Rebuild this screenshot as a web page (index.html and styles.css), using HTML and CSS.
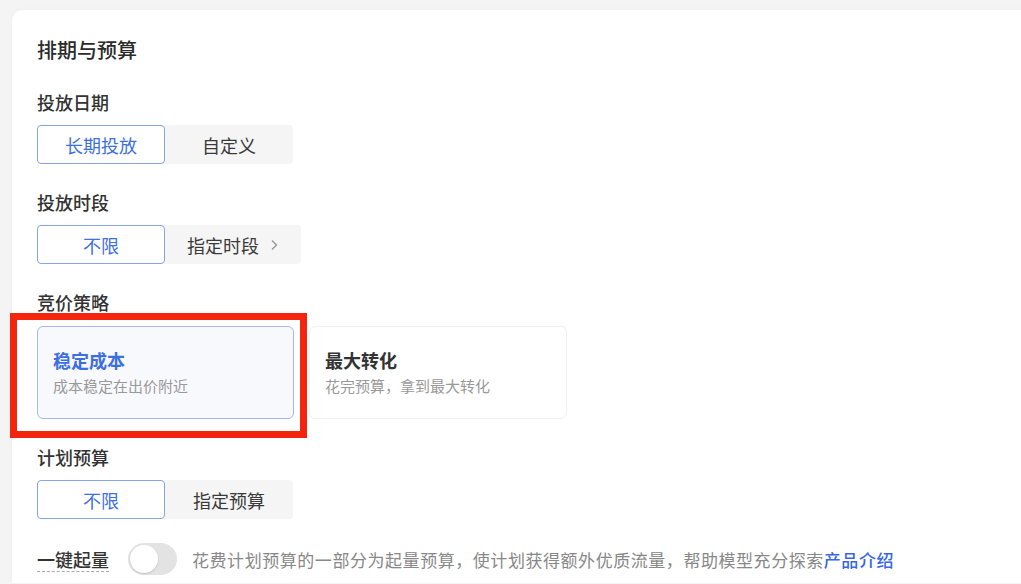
FILE: index.html
```html
<!DOCTYPE html>
<html lang="zh-CN">
<head>
<meta charset="UTF-8">
<title>排期与预算</title>
<link rel="stylesheet" href="styles.css">
</head>
<body>
<!-- 排期与预算 -->
<div class="panel">
<div class="panel-title">排期与预算</div>

<div class="field">
<div class="field-label">投放日期</div>
<div class="segment">
<div class="seg-item active">长期投放</div>
<div class="seg-item">自定义</div>
</div>
</div>

<div class="field">
<div class="field-label">投放时段</div>
<div class="segment">
<div class="seg-item active">不限</div>
<div class="seg-item wide">指定时段
<svg class="chevron" viewBox="0 0 10 14"><path d="M3 2.5l4.5 4.5-4.5 4.5"/></svg>
</div>
</div>
</div>

<div class="field">
<div class="field-label strategy-label">竞价策略</div>
<div class="strategy">
<div class="strategy-wrap">
<div class="strategy-card selected">
<div class="strategy-name">稳定成本</div>
<div class="strategy-desc">成本稳定在出价附近</div>
</div>
<div class="mark"></div>
</div>
<div class="strategy-card">
<div class="strategy-name">最大转化</div>
<div class="strategy-desc">花完预算，拿到最大转化</div>
</div>
</div>
</div>

<div class="field">
<div class="field-label">计划预算</div>
<div class="segment">
<div class="seg-item active">不限</div>
<div class="seg-item">指定预算</div>
</div>
</div>

<div class="boost">
<span class="boost-label">一键起量</span>
<span class="switch"><span class="knob"></span></span>
<span class="boost-desc">花费计划预算的一部分为起量预算，使计划获得额外优质流量，帮助模型充分探索<a class="link">产品介绍</a></span>
</div>
</div>
</body>
</html>
```

FILE: styles.css
```css
/* 页面背景 */
body {
margin: 0;
background-color: #f4f4f4;
font-family: "Noto Sans CJK SC", "Noto Sans", sans-serif;
color: #333;
overflow: hidden;
}

/* 白色面板 */
.panel {
background-color: #fff;
margin: 10px -30px 0 12px;
padding: 26px 0 8px 25px;
border-radius: 10px 0 0 0;
box-shadow: 0 0 6px rgba(0, 0, 0, 0.03);
}

.panel-title {
font-size: 20px;
font-weight: 500;
line-height: 28px;
color: #2b2b2b;
}

/* 表单项 */
.field {
margin-top: 27px;
}

.field-label {
font-size: 18px;
font-weight: 500;
line-height: 22px;
color: #333;
margin-bottom: 12px;
}

.field-label.strategy-label {
margin-bottom: 13px;
}

/* 分段选择 */
.segment {
display: inline-flex;
background-color: #f5f5f5;
border-radius: 4px;
}

.seg-item {
width: 128px;
height: 39px;
box-sizing: border-box;
display: flex;
align-items: center;
justify-content: center;
font-size: 18px;
color: #3a3a3a;
border: 1px solid transparent;
border-radius: 4px;
}

.seg-item.active {
background-color: #fff;
border-color: #86a5e8;
color: #3d6fe0;
}

.seg-item.wide {
width: 136px;
gap: 10px;
}

.chevron {
width: 10px;
height: 14px;
fill: none;
stroke: #999;
stroke-width: 1.4;
}

/* 竞价策略卡片 */
.strategy {
display: flex;
gap: 15px;
}

.strategy-wrap {
position: relative;
}

.strategy-card {
width: 258px;
height: 93px;
box-sizing: border-box;
padding: 20px 15px 0;
border: 1px solid #f0f0f0;
border-radius: 6px;
background-color: #fff;
}

.strategy-card.selected {
width: 257px;
border-color: #a7b9ea;
background-color: #f8f9fd;
}

.strategy-name {
font-size: 18px;
font-weight: 600;
line-height: 26px;
color: #333;
}

.selected .strategy-name {
color: #3d6fe0;
}

.strategy-desc {
font-size: 15px;
line-height: 22px;
color: #999;
margin-top: 2px;
}

/* 红色标注框 */
.mark {
position: absolute;
left: -27px;
top: -13px;
right: -13px;
bottom: -19px;
border: 7px solid #f3250e;
}

/* 一键起量 */
.boost {
display: flex;
align-items: center;
margin-top: 24px;
}

.boost-label {
font-size: 18px;
font-weight: 500;
line-height: 24px;
color: #333;
border-bottom: 1px dashed #aaa;
}

.switch {
position: relative;
width: 49px;
height: 32px;
margin: 0 15px 0 19px;
border-radius: 16px;
background-color: #e3e3e3;
}

.knob {
position: absolute;
left: 2px;
top: 2px;
width: 28px;
height: 28px;
border-radius: 50%;
background-color: #fff;
box-shadow: 0 1px 2px rgba(0, 0, 0, 0.15);
}

.boost-desc {
font-size: 17px;
color: #888;
letter-spacing: 0.55px;
}

.link {
color: #3766e6;
font-weight: 500;
}
```
